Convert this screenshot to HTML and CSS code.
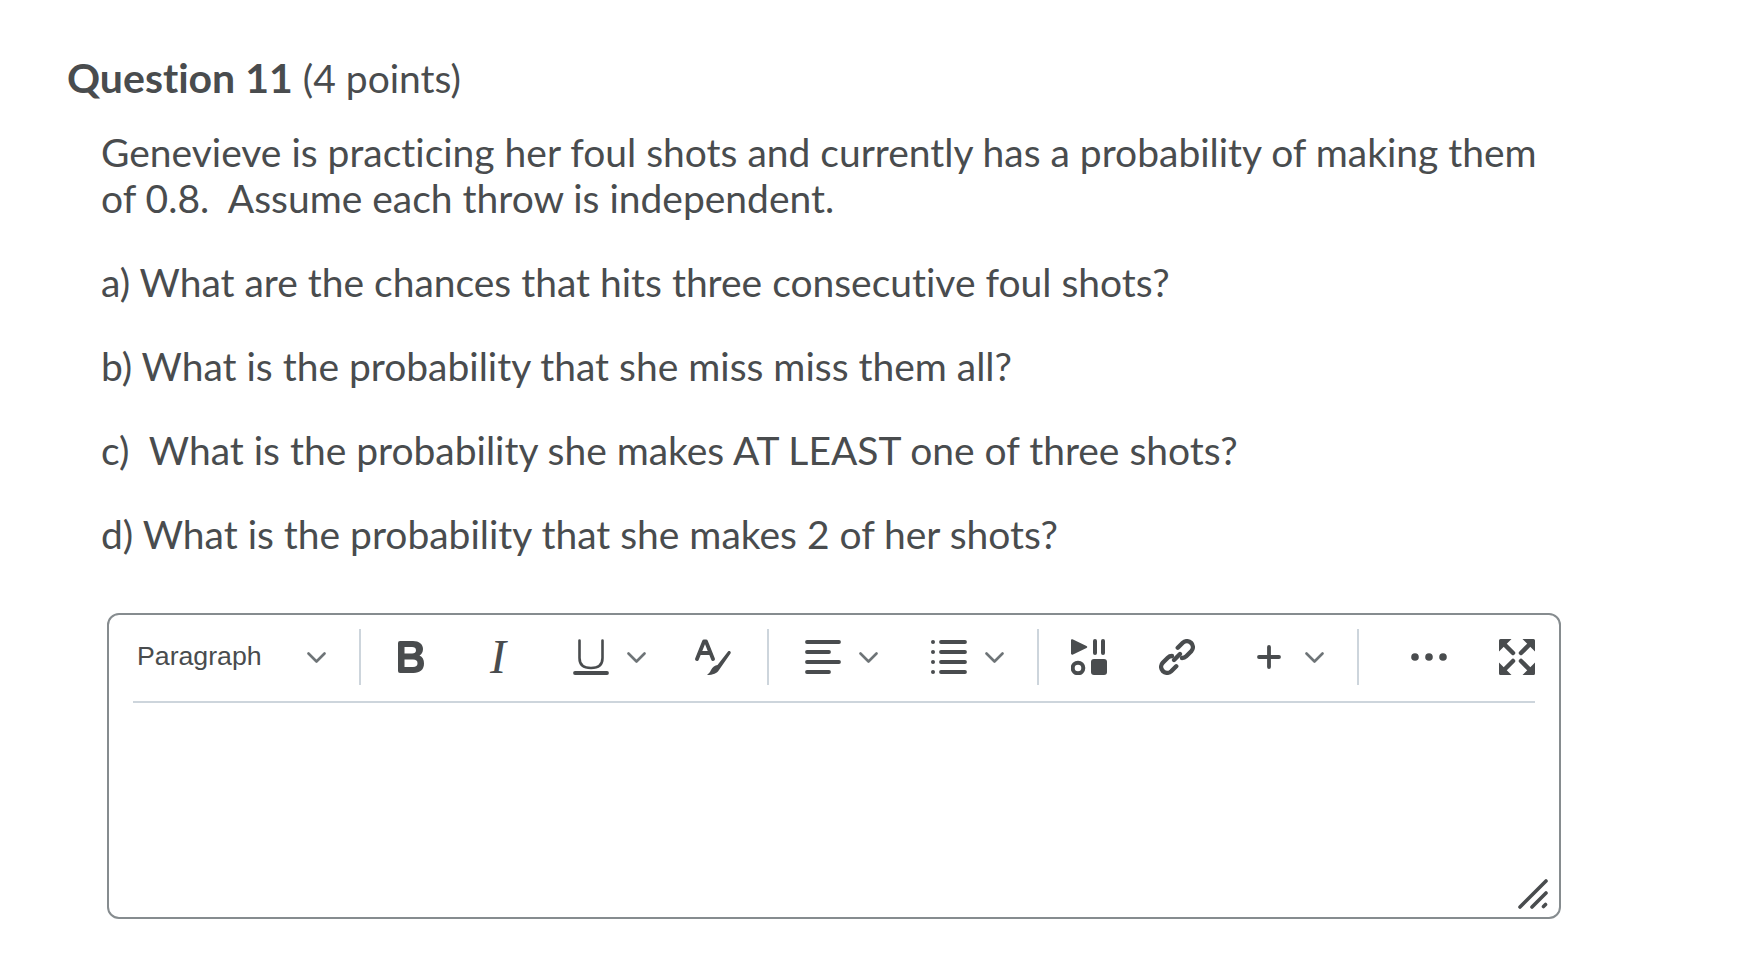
FILE: index.html
```html
<!DOCTYPE html>
<html lang="en">
<head>
<meta charset="utf-8">
<title>Question 11</title>
<link rel="stylesheet" href="styles.css">
</head>
<body>
<main class="page">
  <h2 class="title"><strong>Question 11</strong> (4 points)</h2>
  <div class="question">
    <p>Genevieve is practicing her foul shots and currently has a probability of making them of 0.8.&nbsp; Assume each throw is independent.</p>
    <p>a) What are the chances that hits three consecutive foul shots?</p>
    <p>b) What is the probability that she miss miss them all?</p>
    <p>c)&nbsp; What is the probability she makes AT LEAST one of three shots?</p>
    <p>d) What is the probability that she makes 2 of her shots?</p>
  </div>
  <div class="editor">
    <div class="toolbar">
      <div class="group g-format">
        <span class="format-label">Paragraph</span>
        <svg class="chev" viewBox="0 0 19 11"><path d="M1.500 1.500 9.500 9.500l8-8"/></svg>
      </div>
      <div class="group g-text">
        <svg class="ic ic-b" viewBox="0 0 26 32"><path fill-rule="evenodd" d="M2 0H15c6 0 10 3 10 8 0 3-1.500 5.500-3.500 6.500C24.500 16 26 18.500 26 22.500 26 28.500 22 32 15.500 32H2a2 2 0 0 1-2-2V2a2 2 0 0 1 2-2ZM6.500 6v6.500H14c2.500 0 4-1 4-3.300S16.500 6 14 6ZM6.500 18.500V26H15c3 0 4.500-1.300 4.500-3.800s-1.500-3.700-4.500-3.700Z"/></svg>
        <span class="italic">I</span>
        <svg class="ic ic-u" viewBox="0 0 36 36"><path class="st" d="M6.500 1.500V19c0 6.500 4 10 11.500 10s11.500-3.500 11.500-10V1.500"/><path class="st thick" d="M2 34h32"/></svg>
        <svg class="chev chev-u" viewBox="0 0 19 11"><path d="M1.500 1.500 9.500 9.500l8-8"/></svg>
        <svg class="ic ic-a" viewBox="0 0 36 36"><path class="st thick" d="M2 20 9 2.500h2L18 20M5 14h10"/><path d="M33 12.500c1.500-1.300 3.500.2 2.500 2L24 31c-2 3.500-6 5-12 5 2-1.500 3-3 4-5 1.500-3 4-4.500 6.500-5Z"/></svg>
      </div>
      <div class="group g-align">
        <svg class="ic ic-list" viewBox="0 0 36 34"><path class="st thick" d="M2 2h32M2 12h22M2 22h32M2 32h22"/></svg>
        <svg class="chev" viewBox="0 0 19 11"><path d="M1.500 1.500 9.500 9.500l8-8"/></svg>
        <svg class="ic ic-list ic-bul" viewBox="0 0 36 34"><circle cx="2" cy="2" r="2"/><circle cx="2" cy="12" r="2"/><circle cx="2" cy="22" r="2"/><circle cx="2" cy="32" r="2"/><path class="st thick" d="M10 2h24M10 12h24M10 22h24M10 32h24"/></svg>
        <svg class="chev" viewBox="0 0 19 11"><path d="M1.500 1.500 9.500 9.500l8-8"/></svg>
      </div>
      <div class="group g-insert">
        <svg class="ic ic-media" viewBox="0 0 36 36"><path d="M0 1.500C0 0 1 0 2 .5L15.500 7c1 .5 1 1.500 0 2L2 15.500c-1 .5-2 0-2-1Z"/><rect x="22" y="0" width="4" height="16" rx="2"/><rect x="30" y="0" width="4" height="16" rx="2"/><circle cx="7" cy="29" r="5.300" class="ring"/><rect x="20" y="20" width="16" height="16" rx="3"/></svg>
        <svg class="ic ic-link" viewBox="0 0 36 36"><g class="ring link"><path d="M13 17A6 6 0 0 0 8.760 18.760L3.760 23.760A6 6 0 0 0 12.240 32.240L17.240 27.240"/><path d="M23 19A6 6 0 0 0 27.240 17.240L32.240 12.240A6 6 0 0 0 23.760 3.760L18.760 8.760"/><path d="M15 21l6-6"/></g></svg>
        <svg class="ic ic-plus" viewBox="0 0 24 24"><path class="st thick" d="M12 2v20M2 12h20"/></svg>
        <svg class="chev" viewBox="0 0 19 11"><path d="M1.500 1.500 9.500 9.500l8-8"/></svg>
      </div>
      <div class="group g-more">
        <svg class="ic ic-dots" viewBox="0 0 36 8"><circle cx="4" cy="4" r="3.800"/><circle cx="18" cy="4" r="3.800"/><circle cx="32" cy="4" r="3.800"/></svg>
        <svg class="ic ic-full" viewBox="0 0 36 36"><path d="M1.500 0h11L0 12.500v-11A1.500 1.500 0 0 1 1.500 0ZM34.500 0h-11L36 12.500v-11A1.500 1.500 0 0 0 34.500 0ZM1.500 36h11L0 23.500v11A1.500 1.500 0 0 0 1.500 36ZM34.500 36h-11L36 23.500v11A1.500 1.500 0 0 1 34.500 36Z"/><path class="st shaft" d="M5 5l9 9M31 5l-9 9M5 31l9-9M31 31l-9-9"/></svg>
      </div>
    </div>
    <div class="content"></div>
    <svg class="grip" viewBox="0 0 30 30"><path d="M2 28 28 2M14 28 28 14M25.500 27.500l2-2"/></svg>
  </div>
</main>
</body>
</html>
```
FILE: styles.css
```css
* { box-sizing: border-box; }
html, body { margin: 0; padding: 0; background: #fff; }
body { width: 1760px; height: 969px; overflow: hidden; font-family: Lato, "Liberation Sans", sans-serif; color: #494c4e; font-variant-ligatures: none; }
.page { padding: 52px 0 0 67px; }
.title { margin: 0; font-size: 39px; line-height: 52px; font-weight: 400; }
.title strong { font-weight: 700; font-size: 41px; }
.question { width: 1470px; margin: 25px 0 0 34px; font-size: 38.970px; line-height: 46px; }
.question p { margin: 0 0 38px; }
.editor { position: relative; width: 1454px; height: 306px; margin: 56px 0 0 40px; border: 2px solid #868c8f; border-radius: 12px; padding: 14px 24px 0; }
.toolbar { display: flex; height: 74px; border-bottom: 2px solid #cdd5dc; padding-bottom: 16px; }
.group { display: flex; align-items: center; height: 56px; border-right: 2px solid #cdd5dc; }
.g-format { width: 228px; }
.g-text { width: 408px; }
.g-align { width: 270px; }
.g-insert { width: 320px; }
.g-more { border-right: 0; flex: 1; }
.format-label { font-family: "Liberation Sans", Arial, sans-serif; font-size: 26.700px; line-height: 32px; margin: -3px 0 0 4px; width: 170px; }
.chev { width: 19px; height: 11px; flex: none; }
.chev path { fill: none; stroke: #6e7477; stroke-width: 2.600; stroke-linecap: round; stroke-linejoin: round; }
.ic { flex: none; fill: #494c4e; }
.st { fill: none; stroke: #494c4e; stroke-width: 2.600; stroke-linecap: round; stroke-linejoin: round; }
.thick { stroke-width: 3.800; }
.shaft { stroke-width: 4.500; }
.ring { fill: none; stroke: #494c4e; stroke-width: 4; stroke-linecap: round; }
.link { stroke-width: 4.400; }
.ic-b { width: 26px; height: 32px; margin-left: 37px; }
.italic { font-family: "Liberation Serif", serif; font-style: italic; font-size: 48px; line-height: 1; margin-left: 66px; width: 18px; }
.ic-u { width: 36px; height: 36px; margin-left: 65px; }
.chev-u { margin-left: 18px; }
.ic-a { width: 36px; height: 36px; margin-left: 49px; }
.ic-list { width: 36px; height: 34px; margin-left: 36px; }
.g-align .chev { margin-left: 18px; }
.ic-bul { margin-left: 53px; }
.ic-media { width: 36px; height: 36px; margin-left: 32px; }
.ic-link { width: 36px; height: 36px; margin-left: 52px; }
.ic-plus { width: 24px; height: 24px; margin-left: 62px; }
.g-insert .chev { margin-left: 24px; }
.ic-dots { width: 36px; height: 8px; margin-left: 52px; }
.ic-full { width: 36px; height: 36px; margin-left: 52px; }
.grip { position: absolute; right: 11px; bottom: 8px; width: 30px; height: 30px; }
.grip path { fill: none; stroke: #494c4e; stroke-width: 3.600; stroke-linecap: round; }
```
